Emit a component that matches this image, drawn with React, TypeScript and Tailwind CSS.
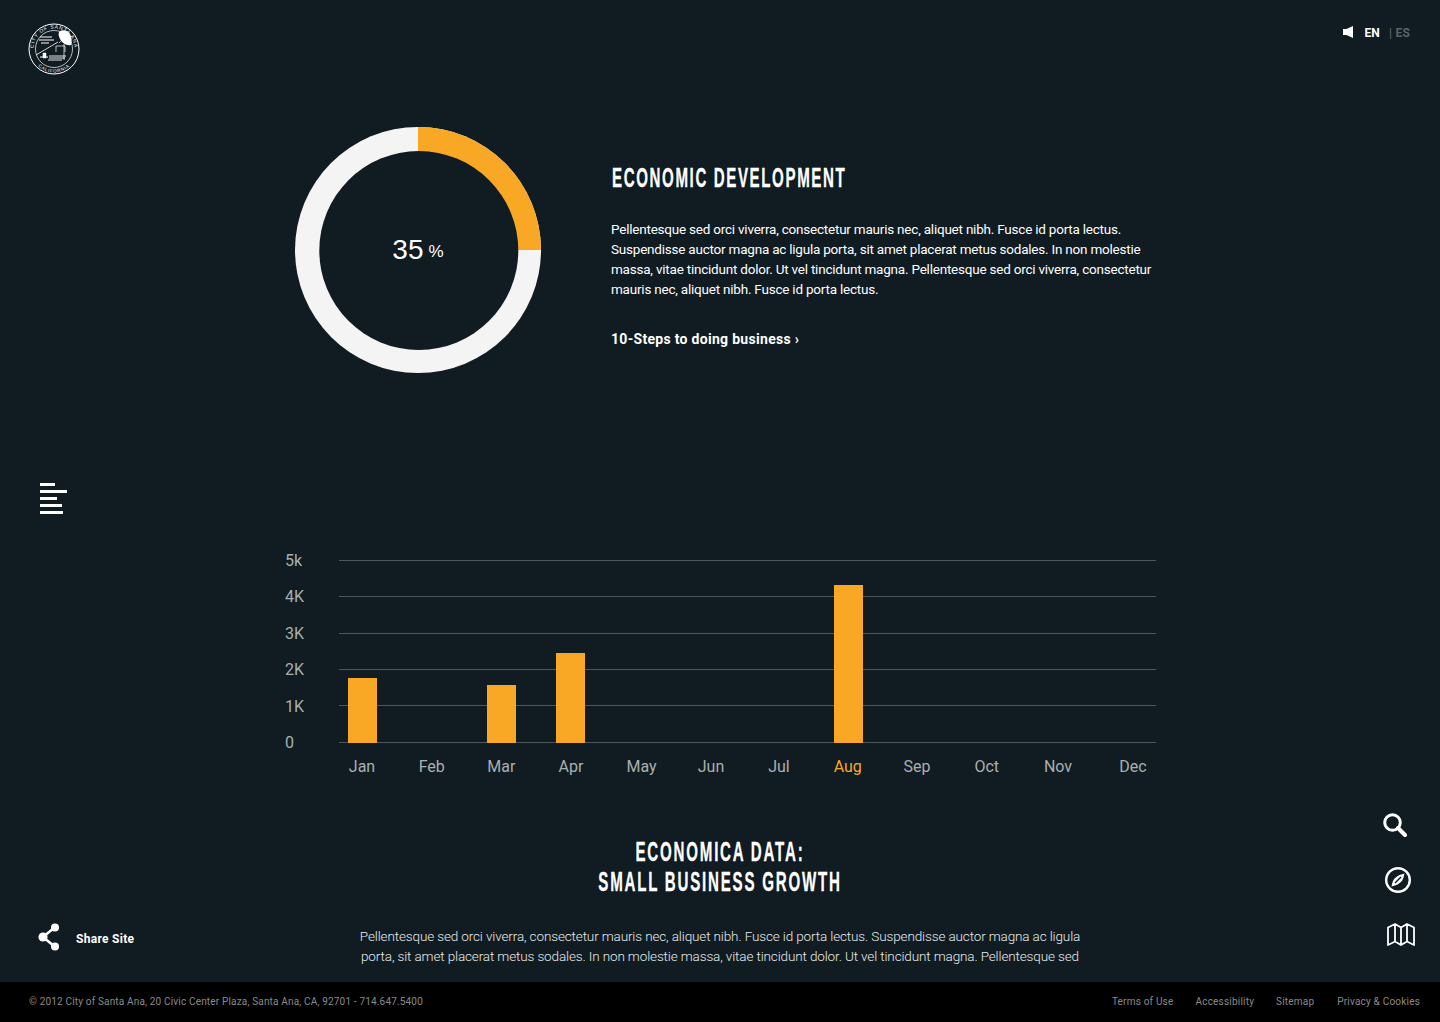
const months = [
  { m: "Jan", w: 70 }, { m: "Feb", w: 69.5 }, { m: "Mar", w: 69.5 }, { m: "Apr", w: 70 },
  { m: "May", w: 71 }, { m: "Jun", w: 68 }, { m: "Jul", w: 68 }, { m: "Aug", w: 69.5 },
  { m: "Sep", w: 69 }, { m: "Oct", w: 70.5 }, { m: "Nov", w: 72 }, { m: "Dec", w: 78 },
];
const heights = [65,0,58,90,0,0,0,158,0,0,0,0];
const yLabels = ["5k","4K","3K","2K","1K","0"];
const menuBars = ["w-[15px]","w-[27px]","w-[17px]","w-[22px]","w-[23px]"];
const din = "font-['Roboto','Liberation_Sans',sans-serif]";
const narrow = "font-['Liberation_Sans',sans-serif] [-webkit-text-stroke:0.3px_#fff]";

function Seal() {
  return (
    <svg width="52" height="52" viewBox="0 0 52 52" fill="none" stroke="#fff">
      <circle cx="26" cy="26" r="25" strokeWidth="1" />
      <circle cx="26" cy="26" r="18.500" strokeWidth="0.7" />
      <defs>
        <path id="sealTop" d="M5.500 26a20.500 20.500 0 0 1 41 0" />
        <path id="sealBottom" d="M2.500 26a23.500 23.500 0 0 0 47 0" />
      </defs>
      <text fill="#fff" stroke="none" fontSize="5" fontFamily="Liberation Sans" letterSpacing="0.8">
        <textPath href="#sealTop" startOffset="50%" textAnchor="middle">CITY OF SANTA ANA</textPath>
      </text>
      <text fill="#fff" stroke="none" fontSize="4.500" fontFamily="Liberation Sans" letterSpacing="0.8">
        <textPath href="#sealBottom" startOffset="50%" textAnchor="middle">CALIFORNIA</textPath>
      </text>
      <path d="M31 9c3-3 9-2 11 2 2 3 2 8 1 11-4 1-9-2-11-6-1-2-2-5-1-7z" fill="#fff" stroke="none" />
      <path d="M8 32 L30 19" strokeWidth="0.8" />
      <path d="M12 14h12M11 17h15M13 20h8" strokeWidth="1.200" />
      <path d="M28 29v-6h9v6M36 21v16M31 20l3-3 2 3" strokeWidth="0.7" />
      <path d="M21 33h17M21 35h16M20 37h14" strokeWidth="0.9" />
      <path d="M15 35v-5h3v5z" fill="#fff" strokeWidth="0.5" />
      <path d="M12 34h8" strokeWidth="1" />
    </svg>
  );
}

export default function App() {
  return (
    <div className={`relative flex h-[1022px] w-full flex-col overflow-hidden bg-[#101b22] text-white ${din}`}>
      <main className="min-h-0 flex-1 overflow-hidden">
        <header className="flex h-[127px] items-start justify-between pl-[28px] pr-[30px] pt-[23px]">
          <Seal />
          <div className="flex items-center pt-[2px] text-[12px] leading-[16px]">
            <svg className="-mt-[3px]" width="10" height="12" viewBox="0 0 10 12" fill="#fff"><path d="M0 3h3.500L10 0v12L3.500 9H0z" /></svg>
            <span className="ml-[11px] font-bold tracking-[0.2px]">EN</span>
            <span className="ml-[9px] font-bold tracking-[0.2px] text-[#596368]">| ES</span>
          </div>
        </header>

        <section className="ml-[295px] flex">
          <div className="relative h-[246px] w-[246px] shrink-0">
            <svg width="246" height="246" viewBox="0 0 246 246">
              <circle cx="123" cy="123" r="123" fill="#f4f4f4" />
              <path d="M123 123V0A123 123 0 0 1 246 123z" fill="#f9a825" />
              <circle cx="123.800" cy="123.500" r="99.500" fill="#101b22" />
            </svg>
            <div className="absolute inset-0 flex items-center justify-center font-['Liberation_Sans',sans-serif] text-[28px] leading-none">
              35<span className="ml-[5px] mt-[3px] text-[17px]">%</span>
            </div>
          </div>
          <div className="ml-[70px] pt-[36px]">
            <h1 className={`ml-[1px] origin-left scale-x-[0.56] whitespace-nowrap text-[27px] font-bold leading-[30px] tracking-[2.85px] ${narrow}`}>ECONOMIC DEVELOPMENT</h1>
            <p className="mt-[26px] whitespace-nowrap text-[13.5px] leading-[20px] tracking-[-0.22px]">
              Pellentesque sed orci viverra, consectetur mauris nec, aliquet nibh. Fusce id porta lectus.<br />
              Suspendisse auctor magna ac ligula porta, sit amet placerat metus sodales. In non molestie<br />
              massa, vitae tincidunt dolor. Ut vel tincidunt magna. Pellentesque sed orci viverra, consectetur<br />
              mauris nec, aliquet nibh. Fusce id porta lectus.
            </p>
            <a className="mt-[30px] block text-[14px] font-bold leading-[20px] tracking-[0.3px]">10-Steps to doing business ›</a>
          </div>
        </section>

        <section className="ml-[285px] mt-[178px] flex w-[871px]">
          <div className="mt-[1px] flex h-[200px] w-[54px] shrink-0 flex-col justify-between text-[16px] leading-[18px] text-[#a9b1ae]">
            {yLabels.map((l) => <span key={l}>{l}</span>)}
          </div>
          <div className="min-w-0 flex-1 pt-[9px]">
            <div className="relative h-[183px] border-b border-[#4c565b]">
              <div className="flex h-[181.5px] flex-col justify-between">
                {yLabels.slice(0, 5).map((l) => <div key={l} className="h-px bg-[#4c565b]" />)}
                <div />
              </div>
              <div className="absolute inset-x-0 top-0 -bottom-px flex items-end pl-[9px]">
                {heights.map((h, i) => (
                  <div key={i} className="w-[69.4px] shrink-0">
                    {h > 0 && <div className="w-[29px] bg-[#f9a825]" style={{ height: h }} />}
                  </div>
                ))}
              </div>
            </div>
            <div className="-ml-[12px] mt-[14px] flex text-[16px] leading-[20px] text-[#a9b1ae]">
              {months.map(({ m, w }) => (
                <span key={m} className={`shrink-0 text-center ${m === "Aug" ? "text-[#f9a825]" : ""}`} style={{ width: w }}>{m}</span>
              ))}
            </div>
          </div>
        </section>

        <section className="mt-[60px] text-center">
          <h2 className={`origin-center scale-x-[0.56] whitespace-nowrap text-[27px] font-bold leading-[30px] tracking-[3.15px] ${narrow}`}>
            ECONOMICA DATA:<br />SMALL BUSINESS GROWTH
          </h2>
          <p className="mt-[29px] whitespace-nowrap text-[13.500px] font-light leading-[20px] tracking-[-0.13px] text-[#e8ecec]">
            Pellentesque sed orci viverra, consectetur mauris nec, aliquet nibh. Fusce id porta lectus. Suspendisse auctor magna ac ligula<br />
            porta, sit amet placerat metus sodales. In non molestie massa, vitae tincidunt dolor. Ut vel tincidunt magna. Pellentesque sed
          </p>
        </section>
      </main>

      <footer className="flex h-[40px] shrink-0 items-center justify-between bg-black pb-[2px] pl-[29px] pr-[20px] text-[10px] tracking-[0.17px] text-[#8a8a8a]">
        <span>© 2012 City of Santa Ana, 20 Civic Center Plaza, Santa Ana, CA, 92701 - 714.647.5400</span>
        <nav className="flex gap-[22px] tracking-[0.2px]">
          <a>Terms of Use</a><a>Accessibility</a><a>Sitemap</a><a className="ml-[1px]">Privacy &amp; Cookies</a>
        </nav>
      </footer>

      <div className="absolute left-[40px] top-[483px] flex flex-col gap-[4px]">
        {menuBars.map((w) => (
          <div key={w} className={`h-[3px] bg-white ${w}`} />
        ))}
      </div>

      <div className="absolute left-[38px] top-[923px] flex items-center gap-[16px]">
        <svg width="22" height="28" viewBox="0 0 22 28" fill="#fff" stroke="#fff">
          <path d="M16 5 5 14l11 9" fill="none" strokeWidth="2.600" />
          <circle cx="17" cy="4.500" r="4" stroke="none" /><circle cx="5" cy="14" r="4.600" stroke="none" /><circle cx="17" cy="23.500" r="4" stroke="none" />
        </svg>
        <span className="mt-[4px] text-[12px] font-bold tracking-[0.3px]">Share Site</span>
      </div>

      <div className="absolute left-[1383px] top-[813px] flex flex-col items-start gap-[30px]">
        <svg width="24" height="24" viewBox="0 0 24 24" fill="none" stroke="#fff">
          <circle cx="9.500" cy="9.500" r="7.800" strokeWidth="3" /><path d="M15 15l7 7" strokeWidth="4" strokeLinecap="round" />
        </svg>
        <svg className="ml-[2px]" width="26" height="26" viewBox="0 0 26 26" fill="none" stroke="#fff">
          <circle cx="13" cy="13" r="11.800" strokeWidth="2.400" />
          <path d="M19.500 6.500C15 7.500 10.500 9.500 8.500 13 7.500 15 7 17 6.500 19.500c4.500-1 9-3 11-6.500 1-2 1.500-4 2-6.500z" fill="#fff" stroke="none" />
          <path d="M16 10l-6 6" stroke="#101b22" strokeWidth="1.400" />
        </svg>
        <svg className="ml-[4px]" width="28" height="23" viewBox="0 0 28 23" fill="none" stroke="#fff" strokeWidth="1.800" strokeLinejoin="round">
          <path d="M1 4.500 8 1l6 3.500L20 1l7 3.500V22l-7-3.500-6 3.500-6-3.500L1 22zM8 1v17.500M14 4.500V22M20 1v17.500" />
        </svg>
      </div>
    </div>
  );
}
